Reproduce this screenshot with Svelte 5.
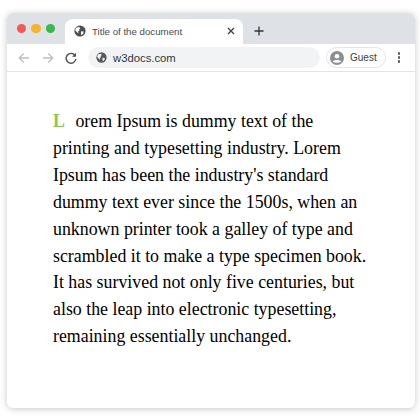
<script>
  const lines = [
    'printing and typesetting industry. Lorem',
    "Ipsum has been the industry's standard",
    'dummy text ever since the 1500s, when an',
    'unknown printer took a galley of type and',
    'scrambled it to make a type specimen book.',
    'It has survived not only five centuries, but',
    'also the leap into electronic typesetting,',
    'remaining essentially unchanged.'
  ];
</script>

<div class="page">
  <div class="window">
    <div class="tabstrip">
      <div class="lights">
        <span class="light red"></span>
        <span class="light yellow"></span>
        <span class="light green"></span>
      </div>
      <div class="tab">
        <svg class="globe" viewBox="0 0 12 12" width="12" height="12">
          <circle cx="6" cy="6" r="5.6" fill="#4a4d52" />
          <path d="M2 2.8 L5.2 2 L6.4 3.2 L5 4.4 L5.6 5.6 L4 6.4 L4.6 8.4 L3.2 7.6 L1.2 5.2 Z" fill="#fff" />
          <path d="M7.2 6.2 L9.6 6.6 L9.2 8.8 L7.4 10.2 L7 8.4 Z" fill="#fff" />
        </svg>
        <span class="tab-title">Title of the document</span>
        <svg class="close" viewBox="0 0 8 8" width="8" height="8">
          <path d="M1 1 L7 7 M7 1 L1 7" stroke="#3c4043" stroke-width="1.3" fill="none" />
        </svg>
      </div>
      <svg class="plus" viewBox="0 0 10 10" width="10" height="10">
        <path d="M5 0.5 V9.5 M0.5 5 H9.5" stroke="#33363a" stroke-width="1.3" fill="none" />
      </svg>
    </div>
    <div class="toolbar">
      <svg class="nav first" viewBox="0 0 12 12" width="12" height="12">
        <path d="M11 6 H1.5 M5.8 1.5 L1.3 6 L5.8 10.5" stroke="#bcbfc3" stroke-width="1.3" fill="none" />
      </svg>
      <svg class="nav" viewBox="0 0 12 12" width="12" height="12">
        <path d="M1 6 H10.5 M6.2 1.5 L10.7 6 L6.2 10.5" stroke="#bcbfc3" stroke-width="1.3" fill="none" />
      </svg>
      <svg class="nav reload" viewBox="0 0 12 12" width="12" height="12">
        <path d="M10 3.4 A4.9 4.9 0 1 0 10.9 7" stroke="#4d5054" stroke-width="1.4" fill="none" />
        <path d="M11 0.8 V4.8 H7 Z" fill="#4d5054" />
      </svg>
      <div class="omnibox">
        <svg class="globe" viewBox="0 0 12 12" width="11" height="11">
          <circle cx="6" cy="6" r="5.6" fill="#55585c" />
          <path d="M2 2.8 L5.2 2 L6.4 3.2 L5 4.4 L5.6 5.6 L4 6.4 L4.6 8.4 L3.2 7.6 L1.2 5.2 Z" fill="#f1f3f4" />
          <path d="M7.2 6.2 L9.6 6.6 L9.2 8.8 L7.4 10.2 L7 8.4 Z" fill="#f1f3f4" />
        </svg>
        <span>w3docs.com</span>
      </div>
      <div class="guest">
        <svg viewBox="0 0 14 14" width="14" height="14">
          <circle cx="7" cy="7" r="7" fill="#8b8e93" />
          <circle cx="7" cy="5.2" r="2.3" fill="#fff" />
          <path d="M2.7 10.6 C4 8.6 10 8.6 11.3 10.6 C10 12.2 4 12.2 2.7 10.6 Z" fill="#fff" />
        </svg>
        <span>Guest</span>
      </div>
      <div class="dots"><i></i><i></i><i></i></div>
    </div>
    <div class="content">
      <p><span class="cap">L</span>orem Ipsum is dummy text of the</p>
      {#each lines as line}
        <p>{line}</p>
      {/each}
    </div>
  </div>
</div>

<style>
  :global(body) { margin: 0; background: #fff; }
  .page { width: 420px; height: 420px; padding: 13px 5px 12px 7px; box-sizing: border-box; overflow: hidden; }
  .window {
    height: 100%;
    border-radius: 6px;
    background: #fff;
    overflow: hidden;
    box-shadow: 0 1px 7px rgba(0, 0, 0, 0.22);
    display: flex;
    flex-direction: column;
  }
  .tabstrip { height: 31px; background: #dee1e6; display: flex; align-items: flex-end; flex: none; }
  .lights { display: flex; gap: 5px; align-self: flex-start; padding: 10.5px 0 0 9.5px; width: 58px; box-sizing: border-box; }
  .light { width: 9.6px; height: 9.6px; border-radius: 50%; flex: none; }
  .red { background: #f25a53; }
  .yellow { background: #f6b42c; }
  .green { background: #38b94a; }
  .tab {
    width: 178px; height: 25px; background: #fff; border-radius: 8px 8px 0 0;
    display: flex; align-items: center; padding: 0 8px 1px 9px; box-sizing: border-box;
  }
  .tab-title { font: 9.7px "Liberation Sans", sans-serif; color: #4a4a50; margin-left: 6px; flex: 1; white-space: nowrap; }
  .plus { margin: 0 0 8px 11px; }
  .toolbar { height: 27px; flex: none; display: flex; align-items: center; border-bottom: 1px solid #e3e4e6; background: #fff; }
  .nav { flex: none; margin-left: 12px; }
  .nav.first { margin-left: 11px; }
  .nav.reload { margin-left: 11px; }
  .omnibox {
    width: 232px; height: 21px; border-radius: 11px; background: #f1f3f4; margin-left: 11px;
    display: flex; align-items: center; padding-left: 8px; box-sizing: border-box; gap: 6px;
    font: 11.3px "Liberation Sans", sans-serif; color: #33363a; flex: none;
  }
  .guest {
    width: 60px; height: 21px; border: 1px solid #e3e4e6; border-radius: 11px; margin-left: 6px; box-sizing: border-box;
    display: flex; align-items: center; padding-left: 3px; gap: 6px;
    font: 10px "Liberation Sans", sans-serif; color: #3c4043; flex: none;
  }
  .dots { display: flex; flex-direction: column; gap: 1.5px; margin-left: 12px; }
  .dots i { display: block; width: 2.4px; height: 2.4px; border-radius: 50%; background: #55585c; }
  .content { flex: 1; padding: 36px 0 0 46px; font: 17.85px/26.9px "Liberation Serif", serif; color: #000; }
  p { margin: 0; white-space: nowrap; }
  .cap { color: #8cc84b; font-weight: bold; margin-right: 10.5px; }
</style>
